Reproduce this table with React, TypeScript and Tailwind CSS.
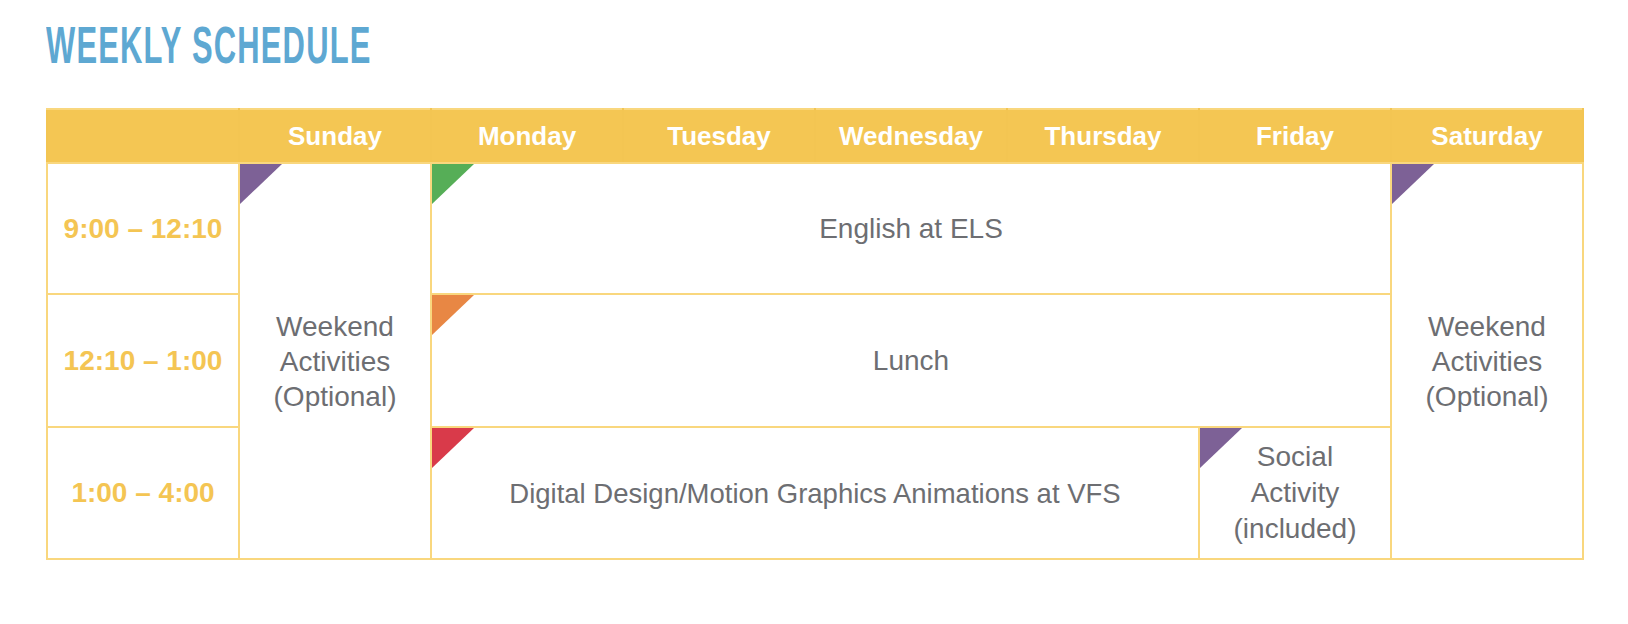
const DAYS = ["Sunday", "Monday", "Tuesday", "Wednesday", "Thursday", "Friday", "Saturday"];

const cell = "relative border-2 border-[#F9D77E] p-0 text-center align-middle";
const headCell = "border-2 border-[#F9D77E] border-x-[#F3C552] p-0 text-center align-middle";
const bodyText = "text-[28px] leading-[35px] text-[#6D6E72]";
const timeText = "text-[28px] font-bold text-[#F4C553]";

function Flag({ color }: { color: string }) {
  return (
    <svg className="absolute left-0 top-0" width="42" height="40" viewBox="0 0 42 40">
      <polygon points="0,0 42,0 0,40" fill={color} />
    </svg>
  );
}

export default function App() {
  return (
    <div className="min-h-[624px] bg-white pl-[46px] pt-[19px] font-['Liberation_Sans',Arial,sans-serif]">
      <h1 className="origin-left scale-x-[0.595] text-[52px] font-bold leading-none tracking-[2px] text-[#5EA8D2]">
        WEEKLY SCHEDULE
      </h1>

      <table className="mt-[37px] w-[1535px] table-fixed border-collapse">
        <colgroup>
          {Array.from({ length: 8 }).map((_, i) => (
            <col key={i} className="w-[192px]" />
          ))}
        </colgroup>
        <thead>
          <tr className="h-[54px] bg-[#F4C653]">
            <th className={headCell} />
            {DAYS.map((d) => (
              <th key={d} className={`${headCell} text-[26px] font-bold text-white`}>
                {d}
              </th>
            ))}
          </tr>
        </thead>
        <tbody>
          <tr className="h-[131px]">
            <td className={cell}>
              <span className={timeText}>9:00 – 12:10</span>
            </td>
            <td rowSpan={3} className={cell}>
              <Flag color="#7D6196" />
              <div className={bodyText}>
                Weekend
                <br />
                Activities
                <br />
                (Optional)
              </div>
            </td>
            <td colSpan={5} className={cell}>
              <Flag color="#56AE57" />
              <span className={bodyText}>English at ELS</span>
            </td>
            <td rowSpan={3} className={cell}>
              <Flag color="#7D6196" />
              <div className={bodyText}>
                Weekend
                <br />
                Activities
                <br />
                (Optional)
              </div>
            </td>
          </tr>
          <tr className="h-[133px]">
            <td className={cell}>
              <span className={timeText}>12:10 – 1:00</span>
            </td>
            <td colSpan={5} className={cell}>
              <Flag color="#E88744" />
              <span className={bodyText}>Lunch</span>
            </td>
          </tr>
          <tr className="h-[132px]">
            <td className={cell}>
              <span className={timeText}>1:00 – 4:00</span>
            </td>
            <td colSpan={4} className={cell}>
              <Flag color="#D93A4A" />
              <span className="text-[27.5px] leading-[35px] text-[#6D6E72]">
                Digital Design/Motion Graphics Animations at VFS
              </span>
            </td>
            <td className={cell}>
              <Flag color="#7D6196" />
              <div className="text-[28px] leading-[36px] text-[#6D6E72]">
                Social
                <br />
                Activity
                <br />
                (included)
              </div>
            </td>
          </tr>
        </tbody>
      </table>
    </div>
  );
}
